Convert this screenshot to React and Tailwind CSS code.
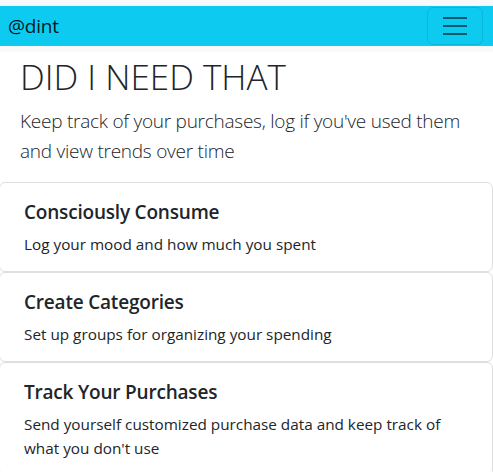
import React from 'react';

const features = [
  { title: 'Consciously Consume', text: 'Log your mood and how much you spent' },
  { title: 'Create Categories', text: 'Set up groups for organizing your spending' },
  { title: 'Track Your Purchases', text: "Send yourself customized purchase data and keep track of what you don't use" },
];

export default function App() {
  return (
    <div className="min-h-screen bg-white text-[#212529] font-['Open_Sans',sans-serif]">
      {/* Navbar */}
      <div className="bg-[#f8f9fa] py-1.5">
        <nav className="h-10 bg-[#0dcaf0] flex items-center justify-between pl-2 pr-[10px]">
          <span className="text-[19px] leading-none text-black/90 tracking-[-0.2px]">@dint</span>
          <button className="w-[56px] h-[38px] rounded-[6px] border border-black/10 flex flex-col items-center justify-center gap-[6px]">
            <span className="block w-6 h-[2px] bg-black/55"></span>
            <span className="block w-6 h-[2px] bg-black/55"></span>
            <span className="block w-6 h-[2px] bg-black/55"></span>
          </button>
        </nav>
      </div>

      {/* Hero */}
      <div className="px-5 pt-[4px]">
        <h1 className="text-[35px] font-light leading-[1.2] mb-2">DID I NEED THAT</h1>
        <p className="text-[19px] font-light leading-[30px] tracking-[-0.25px] mb-4">
          Keep track of your purchases, log if you've used them and view trends over time
        </p>
      </div>

      {/* Feature cards */}
      <div className="flex flex-col">
        {features.map((f) => (
          <div key={f.title} className="-ml-px border border-[#dfdfdf] rounded-[6px] pl-6 pr-4 pt-[17px] pb-[15px]">
            <h5 className="text-[19px] font-[560] leading-6 mb-2 tracking-[-0.2px]">{f.title}</h5>
            <p className="text-[15.3px] leading-6">{f.text}</p>
          </div>
        ))}
      </div>
    </div>
  );
}
